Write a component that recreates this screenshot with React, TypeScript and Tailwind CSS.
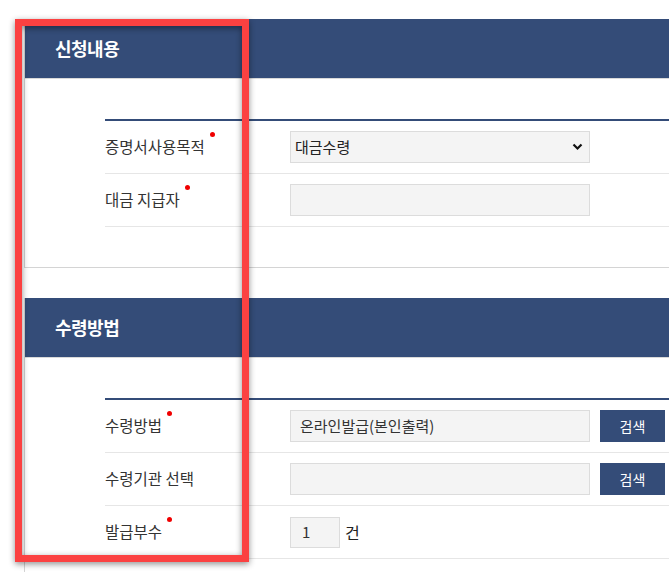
import React from "react";

const FONT = "font-['Malgun_Gothic','Noto_Sans_CJK_KR',sans-serif]";

type Row = {
  label: string;
  required?: boolean;
  field: React.ReactNode;
};

const Dot = () => (
  <span className="relative -top-[15px] ml-[5px] inline-block h-[5px] w-[5px] rounded-full bg-[#f00000] align-middle" />
);

const SearchButton = () => (
  <button className="ml-[10px] h-[32px] w-[65px] bg-[#344c78] text-[14px] text-white">
    검색
  </button>
);

const TextBox = ({ value }: { value?: string }) => (
  <div className="flex h-[32px] w-[300px] items-center border border-[#dcdcdc] bg-[#f4f4f4] px-[9px] text-[15px] text-[#333]">
    {value}
  </div>
);

const Section = ({ title, rows }: { title: string; rows: Row[] }) => (
  <div className="w-[720px] border-b border-l border-[#d4d4d4]">
    {/* section header */}
    <div className="flex h-[60px] items-center border-b border-[#d9d9d9] bg-[#344c78] pl-[30px]">
      <span className="text-[18px] font-bold tracking-[-0.5px] text-white">{title}</span>
    </div>

    {/* form table */}
    <div className="pl-[80px] pt-[40px] pb-[40px]">
      <div className="border-t-2 border-[#344c78]">
        {rows.map((row) => (
          <div
            key={row.label}
            className="flex h-[53px] items-center border-b border-[#e6e6e6]"
          >
            <div className="w-[185px] text-[15.5px] text-[#333]">
              {row.label}
              {row.required && <Dot />}
            </div>
            {row.field}
          </div>
        ))}
      </div>
    </div>
  </div>
);

export default function App() {
  return (
    <div className={`relative h-[572px] w-[669px] overflow-hidden bg-white ${FONT}`}>
      <div className="flex flex-col gap-[30px] pl-[24px] pt-[19px]">
        <Section
          title="신청내용"
          rows={[
            {
              label: "증명서사용목적",
              required: true,
              field: (
                <div className="relative flex h-[32px] w-[300px] items-center border border-[#dcdcdc] bg-[#f4f4f4] pl-[4px] text-[15px] text-[#222]">
                  대금수령
                  <svg
                    className="absolute right-[6px] top-[11px]"
                    width="11"
                    height="8"
                    viewBox="0 0 11 8"
                  >
                    <path d="M1.5 1.5 L5.5 5.5 L9.5 1.5" fill="none" stroke="#111" strokeWidth="2.2" />
                  </svg>
                </div>
              ),
            },
            { label: "대금 지급자", required: true, field: <TextBox /> },
          ]}
        />
        <Section
          title="수령방법"
          rows={[
            {
              label: "수령방법",
              required: true,
              field: (
                <>
                  <TextBox value="온라인발급(본인출력)" />
                  <SearchButton />
                </>
              ),
            },
            {
              label: "수령기관 선택",
              field: (
                <>
                  <TextBox />
                  <SearchButton />
                </>
              ),
            },
            {
              label: "발급부수",
              required: true,
              field: (
                <>
                  <div className="flex h-[31px] w-[50px] items-center border border-[#dcdcdc] bg-[#f4f4f4] px-[11px] text-[15px] text-[#333]">
                    1
                  </div>
                  <span className="ml-[5px] text-[16px] text-[#222]">건</span>
                </>
              ),
            },
          ]}
        />
      </div>

      {/* red highlight annotation */}
      <div className="absolute left-[15px] top-[19px] h-[543px] w-[234px] border-[7px] border-[#fb4141] drop-shadow-[0_2px_3px_rgba(0,0,0,0.45)]" />
    </div>
  );
}
